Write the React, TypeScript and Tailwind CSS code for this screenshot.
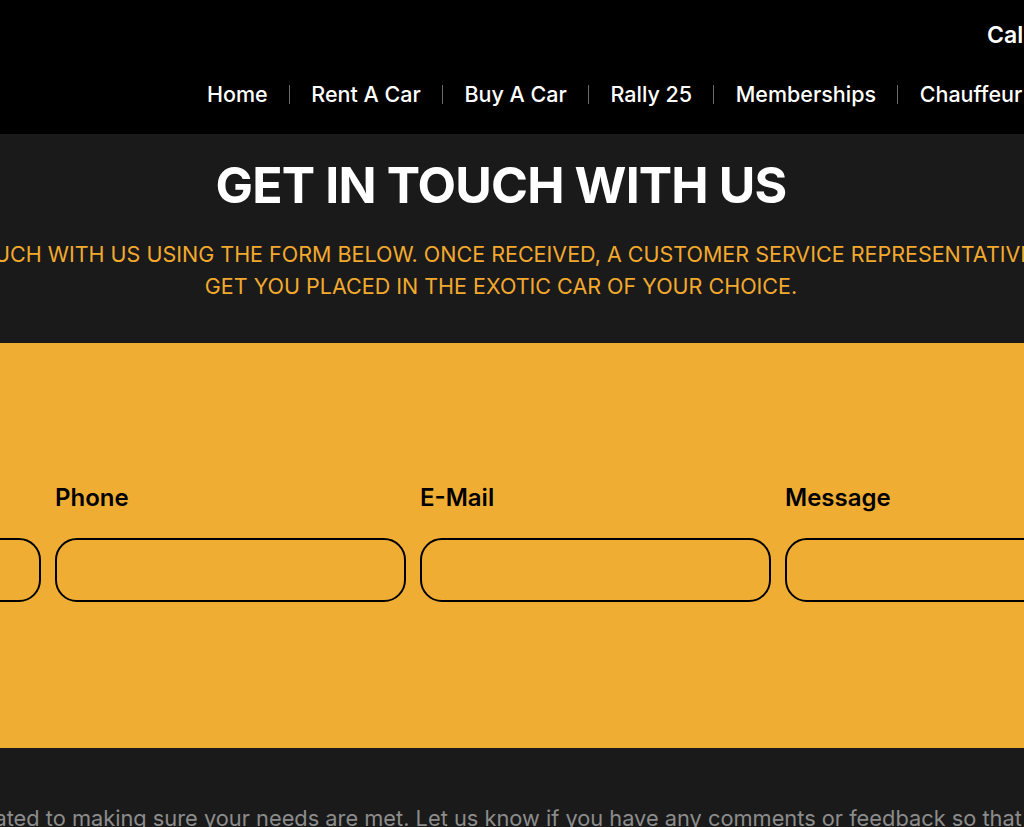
import React from "react"

const navItems = ["Home", "Rent A Car", "Buy A Car", "Rally 25", "Memberships", "Chauffeur"]
const fields = ["Name", "Phone", "E-Mail", "Message"]

function Header() {
  return (
    <header className="h-[134px] bg-black text-white">
      <div className="pl-[987px] pt-[20px] whitespace-nowrap text-[23px] font-semibold leading-[30px]">
        Call Us: (305) 555-0199
      </div>
      <nav className="mt-[29px] flex items-center pl-[207px] whitespace-nowrap text-[21.5px] font-medium leading-[30px]">
        {navItems.map((item, i) => (
          <div key={item} className="flex items-center">
            {i > 0 && <span className="mx-[21.3px] h-[19px] w-px bg-[#6b6b6b]" />}
            <span>{item}</span>
          </div>
        ))}
      </nav>
    </header>
  )
}

function Intro() {
  return (
    <section className="bg-[#1a1a1a] pt-[21px] pb-[41px]">
      <div className="-ml-[199px] w-[1400px] text-center">
        <h1 className="text-[50px] font-bold leading-[60px] tracking-[-0.85px] text-white">GET IN TOUCH WITH US</h1>
        <p className="mt-[23px] whitespace-nowrap text-[21.5px] leading-[32px] text-[#f2a92e]">
          <span className="-ml-[24px] inline-block">
            GET IN TOUCH WITH US USING THE FORM BELOW. ONCE RECEIVED, A CUSTOMER SERVICE REPRESENTATIVE WILL
          </span>
          <br />
          GET YOU PLACED IN THE EXOTIC CAR OF YOUR CHOICE.
        </p>
      </div>
    </section>
  )
}

function ContactForm() {
  return (
    <section className="h-[405px] bg-[#efae33] pt-[137px]">
      <form className="-ml-[310px] flex gap-[14px]">
        {fields.map((f) => (
          <label key={f} className="flex w-[351px] shrink-0 flex-col">
            <span className="text-[24px] font-semibold leading-[36px] text-black">{f}</span>
            <input
              className="mt-[22px] h-[64px] rounded-[22px] border-2 border-black bg-transparent px-4 outline-none"
              type="text"
            />
          </label>
        ))}
      </form>
    </section>
  )
}

export default function App() {
  return (
    <div className="min-h-[827px] w-full overflow-hidden bg-[#1a1a1a] font-['Inter',sans-serif]">
      <Header />
      <Intro />
      <ContactForm />
      <section className="bg-[#1a1a1a] pt-[55px]">
        <p className="-ml-[187px] whitespace-nowrap text-[21.8px] leading-[30px] text-[#8c8c8c]">
          Our team is dedicated to making sure your needs are met. Let us know if you have any comments or feedback so that we can continue to improve.
        </p>
      </section>
    </div>
  )
}
